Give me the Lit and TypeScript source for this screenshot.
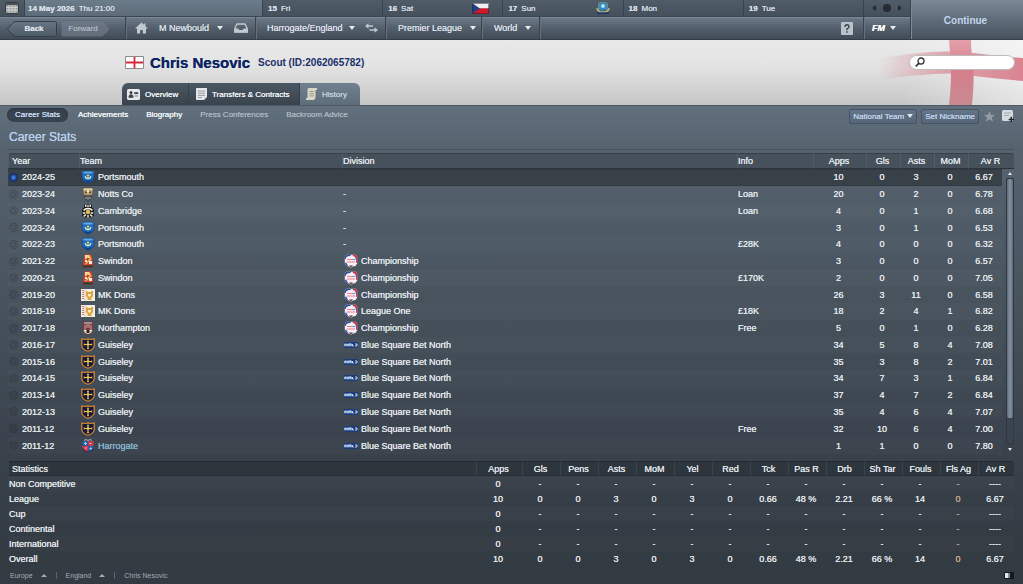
import { LitElement, html, css, svg, nothing, TemplateResult } from "lit";
import { customElement, property, state } from "lit/decorators.js";
import { classMap } from "lit/directives/class-map.js";

type Season = {
  year: string;
  team: string;
  crest: string;
  division?: string;
  logo?: string;
  info?: string;
  stats: [string, string, string, string, string];
};

const season = (
  year: string, team: string, crest: string, division: string, logo: string, info: string, stats: string,
): Season => ({ year, team, crest, division, logo, info, stats: stats.split(" ") as Season["stats"] });

const SEASONS: Season[] = [
  season("2024-25", "Portsmouth", "portsmouth", "", "", "", "10 0 3 0 6.67"),
  season("2023-24", "Notts Co", "notts", "-", "", "Loan", "20 0 2 0 6.78"),
  season("2023-24", "Cambridge", "cambridge", "-", "", "Loan", "4 0 1 0 6.68"),
  season("2023-24", "Portsmouth", "portsmouth", "-", "", "", "3 0 1 0 6.53"),
  season("2022-23", "Portsmouth", "portsmouth", "-", "", "£28K", "4 0 0 0 6.32"),
  season("2021-22", "Swindon", "swindon", "Championship", "league", "", "3 0 0 0 6.57"),
  season("2020-21", "Swindon", "swindon", "Championship", "league", "£170K", "2 0 0 0 7.05"),
  season("2019-20", "MK Dons", "mkdons", "Championship", "league", "", "26 3 11 0 6.58"),
  season("2018-19", "MK Dons", "mkdons", "League One", "league", "£18K", "18 2 4 1 6.82"),
  season("2017-18", "Northampton", "northampton", "Championship", "league", "Free", "5 0 1 0 6.28"),
  season("2016-17", "Guiseley", "guiseley", "Blue Square Bet North", "bluesq", "", "34 5 8 4 7.08"),
  season("2015-16", "Guiseley", "guiseley", "Blue Square Bet North", "bluesq", "", "35 3 8 2 7.01"),
  season("2014-15", "Guiseley", "guiseley", "Blue Square Bet North", "bluesq", "", "34 7 3 1 6.84"),
  season("2013-14", "Guiseley", "guiseley", "Blue Square Bet North", "bluesq", "", "37 4 7 2 6.84"),
  season("2012-13", "Guiseley", "guiseley", "Blue Square Bet North", "bluesq", "", "35 4 6 4 7.07"),
  season("2011-12", "Guiseley", "guiseley", "Blue Square Bet North", "bluesq", "Free", "32 10 6 4 7.00"),
  season("2011-12", "Harrogate", "harrogate", "Blue Square Bet North", "bluesq", "", "1 1 0 0 7.80"),
];

const STAT_COLUMNS = ["Apps", "Gls", "Pens", "Asts", "MoM", "Yel", "Red", "Tck", "Pas R", "Drb", "Sh Tar", "Fouls", "Fls Ag", "Av R"];
const PLAYED = ["10", "0", "0", "3", "0", "3", "0", "0.66", "48 %", "2.21", "66 %", "14", "0", "6.67"];
const UNPLAYED = ["0", ...Array(12).fill("-"), "----"];
const STAT_ROWS: [string, string[]][] = [
  ["Non Competitive", UNPLAYED],
  ["League", PLAYED],
  ["Cup", UNPLAYED],
  ["Continental", UNPLAYED],
  ["International", UNPLAYED],
  ["Overall", PLAYED],
];

const CRESTS: Record<string, TemplateResult> = {
  portsmouth: svg`<path d="M1 1.500Q7 0 13 1.500V7Q12.500 11.500 7 13.500Q1.500 11.500 1 7Z" fill="#1f6cc0" stroke="#12407f" stroke-width=".6"/>
    <path d="M1.300 1.700Q7 .4 12.700 1.700V3.300H1.300Z" fill="#3d86cf"/><path d="M3 2.800h8" stroke="#9cc8e8" stroke-width=".7"/>
    <path d="M4 6a3 3 0 0 0 6 0q-.6 2-3 2t-3-2Z" fill="#e6e7a0" stroke="#d9e6c0" stroke-width=".7"/>
    <circle cx="7" cy="5.600" r="1.200" fill="#ecd65c"/>
    <path d="M2.200 9Q3.500 11.800 7 13Q10.500 11.800 11.800 9Q10 11 7 11Q4 11 2.200 9Z" fill="#12397f"/>`,
  notts: svg`<path d="M2 1h10v5l-1.500 3H3.500L2 6Z" fill="#b09a68" stroke="#4a4234" stroke-width=".6"/><path d="M2.500 1.400h9v1.800h-9Z" fill="#ddd0aa"/>
    <path d="M4 4.500h2v1.500H4zM8 4.500h2v1.500H8z" fill="#4d4538"/><circle cx="7" cy="4.500" r="1.300" fill="#efe9d6"/><path d="M3 8.500h8L10 12l-3 1.800L4 12Z" fill="#2b2d30"/>
    <path d="M5 9.500v2.500M7 9.500v3.500M9 9.500v2.500" stroke="#d8d8d2" stroke-width=".9"/>`,
  cambridge: svg`<path d="M3 .5h8v3l2 2v6l-2 2H3l-2-2v-6l2-2Z" fill="#1d1e1c"/>
    <path d="M4 .7h1.500v2H4zM8.500 .7H10v2H8.500zM6.300 1.200h1.400v2H6.300z" fill="#f4f4ee"/>
    <path d="M2.500 6.300l2.300-1.500h4.400l2.300 1.500M1.800 9h2.400M9.800 9h2.400M2.800 12.500l2-2M11.200 12.500l-2-2" stroke="#f5f4e8" stroke-width="1.500" fill="none"/>
    <circle cx="7" cy="8" r="2.300" fill="#d9bd58"/><path d="M7 11v2.500" stroke="#eee" stroke-width="1.400"/>`,
  swindon: svg`<path d="M3 .5h8v3l1 7.500H2l1-7.500Z" fill="#d0422f"/><path d="M4 1h5L5 5H4z" fill="#f2d7b0"/><path d="M10 3L4 10l1 .5L10.500 5Z" fill="#efc46a"/>
    <path d="M4 6h2v2H4zM8 7h3v3H8z" fill="#f6e9dc"/><circle cx="8" cy="3" r="1.300" fill="#f7d85c"/>
    <path d="M1 10l2 1.500h8L13 10l-1 3.500H2Z" fill="#7c2d1f"/><path d="M3 12.500h8" stroke="#26351f"/>`,
  mkdons: svg`<path d="M0 1h14v12H0Z" fill="#f3efe6"/><path d="M2 2v10" stroke="#b84738" stroke-width="1.400" stroke-dasharray="1 1"/>
    <path d="M4 1v12" stroke="#b6aa96" stroke-width=".5"/><path d="M5 2.500l2 1.500h2.500L12 2.500V8l-2 2.500.8 1.500H6l1-1.500L5 8Z" fill="#e0a536"/>
    <path d="M7 5.500l1.300 1L10 5.500v2L8.400 9 7 7.500Z" fill="#fff6df"/>`,
  northampton: svg`<path d="M1.800 .5h10.400V10q0 2.500-5.200 3.700Q1.800 12.500 1.800 10Z" fill="#7d3643"/><path d="M3 1.200h8v1.500H3z" fill="#b2a9a7"/>
    <path d="M4 4v5M6 3v4M8 3v4M10 4v5" stroke="#d8b7ae" stroke-width=".9"/>
    <path d="M3 9h8v2l-4 2.300L3 11Z" fill="#e7e2d8"/><circle cx="7" cy="10.500" r="1.700" fill="#292024"/><path d="M2.500 9.500l1.500 3M11.500 9.500l-1.500 3" stroke="#578b49"/>`,
  guiseley: svg`<path d="M.8 1L4 1.500 7 .8l3 .7 3.200-.5V8Q12.500 11.500 7 13.300Q1.500 11.500 .8 8Z" fill="#17193a" stroke="#e08b2e" stroke-width="1.200"/>
    <path d="M7 3v8M3 6.500h8" stroke="#efc44c" stroke-width="1.200"/><path d="M6 3.200h2M6 10.700h2M3.300 5.500v2M10.700 5.500v2" stroke="#efc44c" stroke-width=".9"/><circle cx="7" cy="6.500" r="1.300" fill="#efc44c"/>`,
  harrogate: svg`<path d="M1.500 2h11v6.500q-.5 3-5.500 5Q2 11.500 1.500 8.500Z" fill="#2a5ba6"/><path d="M7 2h5.500v5H7zM1.500 7H7v6.500Q2 11.500 1.500 8.500Z" fill="#c93644"/>
    <path d="M3 4.500h3M4.500 3v3M8.500 9.500h2.500M9.700 8.300v2.400" stroke="#a9d5f0" stroke-width=".9"/><path d="M8.500 4.500h2M4 9h2" stroke="#f2d5d0" stroke-width=".9"/>
    <path d="M3 1.500L5 .5 7 1.500 9 .5l2 1" stroke="#ccd0d1" stroke-width=".8" fill="none"/><path d="M1 10q6 6 12 0" stroke="#202d43" fill="none"/>`,
  league: svg`<path d="M2 .8h10L13.200 3V9.500L11.500 12 8.800 12.500 7 13.800 5.200 12.500 2.500 12 .8 9.500V3Z" fill="#f6eff4"/>
    <path d="M.8 5V3L2 .8H7.500L6 2Q2 2.200 1.800 5Z" fill="#2a4fa3"/><path d="M13.200 9V3L12 .8H8.500L9 2Q12.200 2.200 12.200 9Z" fill="#c73452"/>
    <path d="M.8 9l1.700 3 1.700.3L2.200 8.500Z" fill="#2a4fa3"/><path d="M3 5.500h8M3 8h8" stroke="#f1788d" stroke-width="1.200"/>
    <path d="M8 5.500h3" stroke="#5aa5e0" stroke-width="1.200"/><path d="M5 11.500h4L7 13.600Z" fill="#6b2c45"/>`,
  bluesq: svg`<path d="M0 4h14v6H0Z" fill="#1d3b78"/><path d="M0 8.500V5.500h8V8.500Z" fill="#5f86be"/><path d="M1 8V6l1.500 1L4 6v2M5 8V6h2v2M8.500 6v2h1.500M11 6h2v2h-2" stroke="#d4e3f5" stroke-width=".9" fill="none"/>`,
};

const crest = (name: string) => svg`<svg class="crest" viewBox="0 0 14 14" aria-hidden="true">${CRESTS[name]}</svg>`;
const caret = () => html`<span class="caret"></span>`;

const base = css`
  * { box-sizing: border-box; }
  button, input {
    font: inherit; color: inherit; text-shadow: inherit; margin: 0; padding: 0; border: 0; background: none;
  }
  button { cursor: pointer; display: flex; align-items: center; white-space: nowrap; }
  a { color: inherit; text-decoration: none; white-space: nowrap; }
  svg { display: block; flex: none; }
  .caret { width: 0; height: 0; border: 3px solid transparent; border-top: 4px solid #e6ebef; border-bottom: 0; flex: none; }
`;

@customElement("top-bar")
class TopBar extends LitElement {
  static styles = [base, css`
    :host {
      display: grid; grid-template-columns: minmax(0, 1fr) 113px; border-bottom: 1px solid #353e47;
      color: #d9dfe4; font-size: 9px; text-shadow: 0 0 0 currentColor;
    }
    .dates {
      display: grid; grid-template-columns: 24px 238px repeat(5, minmax(0, 1fr)) 47px; height: 17px; font-size: 8px;
      background: linear-gradient(#505d69, #44505b); border-bottom: 1px solid #3b454f;
    }
    .dates > * { display: flex; align-items: center; border-left: 1px solid #38424c; }
    .dates > :first-child { border: 0; justify-content: center; }
    .today { padding-left: 3px; gap: 4px; font-weight: bold; background: linear-gradient(#6c7c8b, #5d6b79); }
    .today span, .day span { font-weight: normal; }
    .day { padding: 0 13px 0 5px; gap: 4px; font-weight: bold; }
    .day svg { margin-left: auto; }
    .pager { justify-content: space-around; padding: 0 3px; }
    .nav { display: flex; height: 22px; background: linear-gradient(#6d7b89, #535f6c 50%, #414b56); box-shadow: inset 0 1px #7b8996; }
    .history { display: flex; gap: 4px; align-items: center; width: 125px; padding: 1px 0 0 7px; font-size: 8px; }
    .arrow { display: grid; place-items: center; }
    .arrow > * { grid-area: 1 / 1; }
    .arrow.back { font-weight: bold; }
    .arrow.back span { padding-left: 4px; }
    .arrow.forward { color: #aab4bd; }
    .arrow.forward span { padding-right: 5px; }
    .seg { display: flex; align-items: center; justify-content: space-between; border-left: 1px solid #39434d; box-shadow: inset 1px 0 #66737f; }
    .seg button { gap: 8px; }
    .club { width: 130px; padding: 0 7px 0 9px; }
    .nation { width: 130px; padding: 0 7px 0 11px; }
    .nation button { gap: 6px; }
    .league { width: 96px; padding: 0 10px 0 12px; }
    .world { width: 58px; padding: 0 10px 0 12px; }
    .rest { flex: 1; padding-right: 10px; justify-content: flex-end; }
    .menu { width: 47px; padding: 0 12px 0 8px; font-weight: bold; font-style: italic; color: #fff; }
    .menu button { gap: 5px; }
    .continue {
      display: flex; justify-content: center; align-items: center; padding: 1px 3px 0 0; font-size: 10px; font-weight: bold; color: #c3d6ec; text-shadow: none;
      background: linear-gradient(#7b8997, #5f6d7a 50%, #46515c); border-left: 1px solid #3a444e; box-shadow: inset 1px 0 #7c8a97;
    }
  `];

  render() {
    const day = (n: string, name: string, icon: unknown = nothing) => html`<div class="day">${n} <span>${name}</span>${icon}</div>`;
    return html`
      <div>
        <div class="dates">
          <div><svg width="14" height="12" viewBox="0 0 14 12"><rect x=".5" y=".5" width="13" height="11" rx="1" fill="#9aa19f" stroke="#353b3f"/><path d="M1 1h12v2H1z" fill="#4a5154"/><path d="M1 5.500h12M1 8h12M4 3v8M7 3v8M10 3v8" stroke="#d8dcd9" stroke-width=".8"/></svg></div>
          <div class="today">14 May 2026 <span>Thu 21:00</span></div>
          ${day("15", "Fri")}
          ${day("16", "Sat", svg`<svg width="17" height="11" viewBox="0 0 17 11"><path d="M0 0h17v5.500H0z" fill="#f0f0f0"/><path d="M0 5.500h17V11H0z" fill="#d2172b"/><path d="M0 0l8 5.500L0 11z" fill="#26407f"/><path d="M.5.5h16v10H.5z" fill="none" stroke="#1c2329" stroke-opacity=".5"/></svg>`)}
          ${day("17", "Sun", svg`<svg width="14" height="14" viewBox="0 0 14 14"><path d="M2 3l2-2h6l2 2v6H2z" fill="#7e8a70"/><circle cx="7" cy="5.500" r="4" fill="#2f86cc"/><circle cx="7" cy="5" r="2" fill="#a8e4fb"/><path d="M1 7q0 4 6 4t6-4" fill="none" stroke="#c5c98d" stroke-width="1.200"/><path d="M1 11.500h12V13H1z" fill="#1f3566"/></svg>`)}
          ${day("18", "Mon")}
          ${day("19", "Tue")}
          <div class="pager">
            <button aria-label="Previous"><svg width="5" height="6"><path d="M5 0v6L1 3z" fill="#23292f"/></svg></button>
            <button aria-label="Today"><svg width="8" height="8"><circle cx="4" cy="4" r="4" fill="#252b30"/></svg></button>
            <button aria-label="Next"><svg width="5" height="6"><path d="M0 0v6l4-3z" fill="#23292f"/></svg></button>
          </div>
        </div>
        <div class="nav">
          <div class="history">
            <button class="arrow back"><svg width="50" height="16" viewBox="0 0 50 16"><defs><linearGradient id="b" x2="0" y2="1"><stop stop-color="#687786"/><stop offset="1" stop-color="#4c5965"/></linearGradient></defs><path d="M9 .5H47.500Q49.500 .5 49.500 2.500V13.500Q49.500 15.500 47.500 15.500H9Q7 15.500 5.500 13.500L1 9Q.3 8 1 7L5.500 2.500Q7 .5 9 .5Z" fill="url(#b)" stroke="#343e48"/></svg><span>Back</span></button>
            <button class="arrow forward"><svg width="49" height="16" viewBox="0 0 49 16"><path d="M2 .5H40Q42 .5 43.500 2.500L48 7Q48.700 8 48 9L43.500 13.500Q42 15.500 40 15.500H2Q.5 15.500.5 13.500V2.500Q.5.5 2 .5Z" fill="#74818d" opacity=".6"/></svg><span>Forward</span></button>
          </div>
          <div class="seg club">
            <button aria-label="Home"><svg width="13" height="12" viewBox="0 0 13 12"><path d="M6.500 .5L0 6.500h2V11.500H5.200V8h2.600v3.500H11V6.500h2L10.500 4.200V1.500H9v1.300Z" fill="#c0c9d0"/></svg></button>
            <button>M Newbould ${caret()}</button>
            <button aria-label="Inbox"><svg width="14" height="10" viewBox="0 0 14 10"><path d="M3 1h8l2.300 4.500V9H.7V5.500Z" fill="none" stroke="#c0c9d0" stroke-width="1.300"/><path d="M.5 5.500h3.800q.5 1.500 1.500 1.500h2.400q1 0 1.500-1.500h3.800V9.500H.5Z" fill="#c0c9d0"/></svg></button>
          </div>
          <div class="seg nation">
            <button>Harrogate/England ${caret()}</button>
            <button aria-label="Switch"><svg width="13" height="10" viewBox="0 0 13 10"><path d="M0 3L3.500 .3V2.300H8V3.700H3.500V5.700ZM13 7L9.500 4.300V6.300H4.500V7.700H9.500V9.700Z" fill="#c0c9d0"/></svg></button>
          </div>
          <div class="seg league"><button>Premier League ${caret()}</button></div>
          <div class="seg world"><button>World ${caret()}</button></div>
          <div class="seg rest"><button aria-label="Help"><svg width="12" height="13" viewBox="0 0 12 13"><rect width="12" height="13" rx="1" fill="#b9c3cb"/><path d="M4 5q0-2.200 2-2.200T8 4.700Q8 6 6 6.800v1.400M6 9.300v1.500" fill="none" stroke="#3b454e" stroke-width="1.400"/></svg></button></div>
          <div class="seg menu"><button>FM ${caret()}</button></div>
        </div>
      </div>
      <button class="continue">Continue</button>
    `;
  }
}

@customElement("person-header")
class PersonHeader extends LitElement {
  static styles = [base, css`
    :host {
      display: block; position: relative; background: linear-gradient(#e9e9e9, #e3e3e3 40%, #c6c6c6);
      border-bottom: 1px solid #4d5965;
    }
    .art { position: absolute; right: 0; top: 0; width: 150px; height: 100%; }
    .title { position: relative; display: flex; align-items: center; height: 43px; padding: 1px 8px 0 125px; color: #1b2f6b; }
    h1 { margin: 0 0 0 6px; font-size: 15px; color: #0b2463; text-shadow: 0 0 0 currentColor; }
    .role { margin-left: 8px; padding-top: 1px; font-size: 10px; font-weight: bold; }
    .search {
      display: flex; align-items: center; margin-left: auto; width: 106px; height: 15px; padding: 0 5px; gap: 3px;
      background: #fff; border: 1px solid #bcbcbc; border-radius: 8px;
    }
    .search input { flex: 1; min-width: 0; color: #222; font-size: 9px; outline: 0; }
    .tabs { position: relative; display: flex; margin-left: 122px; }
    .tab {
      display: flex; align-items: center; gap: 5px; height: 22px; padding-left: 5px; font-size: 8px;
      color: #f1f4f6; background: linear-gradient(#4b5763, #39434d); text-shadow: 0 0 0 currentColor;
      border-right: 1px solid #36404a;
    }
    .overview { width: 67px; border-radius: 6px 0 0 0; }
    .transfers { width: 111px; padding-left: 7px; }
    .active { width: 60px; padding-left: 6px; border: 0; border-radius: 0 6px 0 0; color: #c5d0da; background: linear-gradient(#718191, #5f6d7a); }
  `];

  render() {
    return html`
      <svg class="art" viewBox="0 0 150 65" preserveAspectRatio="xMaxYMid meet" aria-hidden="true">
        <defs>
          <linearGradient id="fade"><stop offset="0" stop-color="#d5717f" stop-opacity="0"/><stop offset=".45" stop-color="#d5717f" stop-opacity=".55"/><stop offset="1" stop-color="#d5717f" stop-opacity=".85"/></linearGradient>
          <linearGradient id="pole" x2="0" y2="1"><stop stop-color="#e3a0aa"/><stop offset=".5" stop-color="#d57f8b"/><stop offset="1" stop-color="#c98a91"/></linearGradient>
          <linearGradient id="white"><stop stop-color="#fff" stop-opacity="0"/><stop offset="1" stop-color="#fff" stop-opacity=".5"/></linearGradient>
        </defs>
        <path d="M30 0H150V65H30Z" fill="url(#white)"/>
        <path d="M5 19Q45 11 78 11.500L101 13Q130 17 150 18V41Q125 39 101 36L77 33.500Q45 34 5 40Z" fill="url(#fade)"/>
        <path d="M76 0H98Q98 10 100.500 30Q101 45 99 65H76Q79 40 77.500 20Z" fill="url(#pole)"/>
      </svg>
      <div class="title">
        <svg width="19" height="13" viewBox="0 0 19 13"><path d="M.5.5h18v12H.5z" fill="#fff" stroke="#8c8c8c"/><path d="M9.500 1v11M1 6.500h17" stroke="#d4283b" stroke-width="1.800"/></svg>
        <h1>Chris Nesovic</h1>
        <span class="role">Scout (ID:2062065782)</span>
        <label class="search">
          <svg width="10" height="10" viewBox="0 0 10 10"><circle cx="6" cy="4" r="3" fill="none" stroke="#333" stroke-width="1.300"/><path d="M4 6.200L.8 9.300" stroke="#333" stroke-width="1.700"/></svg>
          <input type="search" aria-label="Search">
        </label>
      </div>
      <nav class="tabs">
        <a class="tab overview" href="#overview"><svg width="13" height="11" viewBox="0 0 13 11"><rect width="13" height="11" rx="1.500" fill="#e8eaeb"/><circle cx="4" cy="3.500" r="1.500" fill="#39424a"/><path d="M1.800 8.500q0-3 2.200-3t2.200 3ZM7.500 3.500H11v1.300H7.500zM7.500 7H11" fill="#39424a" stroke="#39424a" stroke-width=".6"/></svg>Overview</a>
        <a class="tab transfers" href="#transfers"><svg width="11" height="12" viewBox="0 0 11 12"><path d="M0 0h11v9L8 12H0z" fill="#e4e7e9"/><path d="M2 3h7M2 5.200h7M2 7.400h7M2 9.600h4" stroke="#8c959c" stroke-width=".9"/></svg>Transfers &amp; Contracts</a>
        <a class="tab active" href="#history"><svg width="11" height="12" viewBox="0 0 11 12"><path d="M2 0h9v2H9.500v8L8 12H0v-2h1.500V2Z" fill="#d9d6c7"/><path d="M3.500 3.500h4.300M3.500 5.700h4.300M3.500 7.900h4.300" stroke="#8a8677" stroke-width=".8"/></svg>History</a>
      </nav>
    `;
  }
}

@customElement("sub-nav")
class SubNav extends LitElement {
  static styles = [base, css`
    :host { display: flex; align-items: center; justify-content: space-between; height: 20px; padding: 0 9px 0 7px; font-size: 8px; text-shadow: 0 0 0 currentColor; }
    nav, .tools { display: flex; align-items: center; }
    nav { gap: 2px; padding-bottom: 2px; }
    a { padding: 0 8px; line-height: 14px; color: #f4f6f8; }
    a.muted { color: #a9b5c0; }
    a.active { border-radius: 8px; color: #c9dcf0; background: #384350; box-shadow: inset 0 1px 2px #29323b; }
    .tools { gap: 4px; color: #bfd2e8; }
    .tool { height: 15px; padding: 0 3px; gap: 3px; border: 1px solid #465361; border-radius: 2px; background: linear-gradient(#64758a, #566577); }
    .tool .caret { border-top-color: #dce6f0; }
    .star { margin: 0 3px 0 1px; }
  `];

  render() {
    return html`
      <nav>
        <a class="active" href="#career">Career Stats</a>
        <a href="#achievements">Achievements</a>
        <a href="#biography">Biography</a>
        <a class="muted" href="#press">Press Conferences</a>
        <a class="muted" href="#advice">Backroom Advice</a>
      </nav>
      <div class="tools">
        <button class="tool">National Team ${caret()}</button>
        <button class="tool">Set Nickname</button>
        <button class="star" aria-label="Favourite"><svg width="11" height="11" viewBox="0 0 11 11"><path d="M5.500 0L7 3.800l4 .2-3.100 2.500L9 10.700 5.500 8.300 2 10.700 3.100 6.500 0 4l4-.2Z" fill="#929ba3"/></svg></button>
        <button aria-label="Add note"><svg width="12" height="12" viewBox="0 0 12 12"><path d="M1.500 0h8Q11 0 11 1.500V11H1.500Q0 11 0 9.500v-8Q0 0 1.500 0Z" fill="#d8dcde"/><path d="M2 3h7M2 5.500h5" stroke="#9aa3aa" stroke-width=".9"/><path d="M9.300 6.800v5.200M6.700 9.400H12" stroke="#20262b" stroke-width="1.500"/></svg></button>
      </div>
    `;
  }
}

const tableStyles = css`
  table { width: 100%; border-collapse: separate; border-spacing: 0; table-layout: fixed; }
  th, td { padding: 0 2px 0 0; text-align: center; vertical-align: middle; white-space: nowrap; overflow: hidden; font-weight: normal; }
  thead th { border-left: 1px solid #ffffff12; border-bottom: 1px solid #2d353c; border-top: 1px solid #00000033; }
  thead th:first-child { text-align: left; padding-left: 3px; border-radius: 3px 0 0 0; }
  thead th:last-child { border-radius: 0 3px 0 0; }
`;

@customElement("career-table")
class CareerTable extends LitElement {
  @property({ attribute: false }) seasons: Season[] = [];
  @state() private selected = 0;

  static styles = [base, tableStyles, css`
    :host { display: grid; min-height: 0; }
    table { height: 100%; }
    thead { height: 16px; }
    thead th { height: 16px; background: #46515c; }
    .year { width: 71px; }
    .team { width: 263px; }
    .info { width: 76px; }
    .apps { width: 53px; }
    .num { width: 34px; }
    .bar { width: 12px; }
    .left { text-align: left; }
    tbody td { line-height: 14px; }
    .cell { display: flex; align-items: center; gap: 3px; height: 14px; padding-left: 1px; }
    .crest { width: 14px; height: 14px; margin-left: 1px; }
    tbody tr:nth-child(odd) td { background: #ffffff05; }
    tbody tr.selected td { background: #394148; box-shadow: inset 0 1px #323a41, inset 0 -1px #323a41; }
    tbody td.scroll, tbody tr.selected td.scroll { padding: 0; background: none; box-shadow: none; height: 100%; }
    .link { color: #85b9cf; }
    .pick { appearance: none; width: 9px; height: 9px; border: 1px solid #00000030; border-radius: 50%; margin-right: 1px; background: radial-gradient(#0000 1px, #0003 2px, #0000 3px); }
    .pick:checked { background: radial-gradient(#3d7be0 1px, #1d3c80 3px); }
    .track { display: grid; grid-template-rows: 9px minmax(0, 1fr) 9px; justify-items: center; height: 100%; padding-left: 3px; }
    .track::before, .track::after { content: ""; align-self: center; border: 2px solid transparent; border-bottom: 3px solid #e3e8ec; border-top: 0; }
    .track::after { transform: rotate(180deg); }
    .rail { width: 8px; border: 1px solid #2f3840; border-radius: 2px; background: #3a444e; }
    .thumb { height: 90%; border-radius: 2px; background: linear-gradient(90deg, #5c6a78, #8593a3 50%, #5c6a78); }
  `];

  render() {
    return html`
      <table>
        <colgroup>
          <col class="year"><col class="team"><col><col class="info"><col class="apps">
          <col class="num"><col class="num"><col class="num"><col class="num"><col class="bar">
        </colgroup>
        <thead>
          <tr>
            <th>Year</th><th class="left">Team</th><th class="left">Division</th><th class="left">Info</th>
            <th>Apps</th><th>Gls</th><th>Asts</th><th>MoM</th><th colspan="2">Av R</th>
          </tr>
        </thead>
        <tbody>${this.seasons.map((s, i) => this.row(s, i))}</tbody>
      </table>
    `;
  }

  private row(s: Season, i: number) {
    return html`
      <tr class=${classMap({ selected: i === this.selected })}>
        <td><div class="cell"><input class="pick" type="radio" name="season" aria-label=${`${s.year} ${s.team}`}
          .checked=${i === this.selected} @change=${() => (this.selected = i)}>${s.year}</div></td>
        <td><div class="cell">${crest(s.crest)}<span class=${classMap({ link: s.team === "Harrogate" })}>${s.team}</span></div></td>
        <td><div class="cell">${s.logo ? crest(s.logo) : nothing}<span>${s.division}</span></div></td>
        <td><div class="cell">${s.info}</div></td>
        ${s.stats.map((v) => html`<td>${v}</td>`)}
        ${i === 0 ? html`<td class="scroll" rowspan=${this.seasons.length} aria-hidden="true"><div class="track"><div class="rail"><div class="thumb"></div></div></div></td>` : nothing}
      </tr>
    `;
  }
}

@customElement("stats-table")
class StatsTable extends LitElement {
  static styles = [base, tableStyles, css`
    :host { display: block; }
    thead th { height: 15px; background: #2d353d; border-bottom-color: #262d33; }
    tbody th, tbody td { height: 15px; }
    tbody th { text-align: left; padding-left: 1px; }
    tbody tr:nth-child(odd) > * { background: #ffffff05; }
    .apps { width: 46px; }
    .num { width: 38px; }
    .last { width: 36px; }
    .amber { color: #c9ab8a; }
  `];

  render() {
    return html`
      <table>
        <colgroup>
          <col>
          ${STAT_COLUMNS.map((_, i) => html`<col class=${i === 0 ? "apps" : i === 13 ? "last" : "num"}>`)}
        </colgroup>
        <thead><tr><th>Statistics</th>${STAT_COLUMNS.map((c) => html`<th scope="col">${c}</th>`)}</tr></thead>
        <tbody>
          ${STAT_ROWS.map(([name, values]) => html`
            <tr><th scope="row">${name}</th>${values.map((v, i) => html`<td class=${i === 12 ? "amber" : ""}>${v}</td>`)}</tr>`)}
        </tbody>
      </table>
    `;
  }
}

@customElement("app-root")
class AppRoot extends LitElement {
  static styles = [base, css`
    :host {
      display: flex; flex-direction: column; height: 100vh; min-height: 560px; overflow: hidden;
      font-family: "Liberation Sans", Arial, sans-serif; font-size: 8px; color: #e2e7eb;
      background: linear-gradient(#62707d 105px, #56636f 150px, #4d5964 240px, #3b444e 430px, #333b43 540px, #323a42);
    }
    main { flex: 1; display: flex; flex-direction: column; min-height: 0; padding: 0 9px 0 8px; font-size: 9px; text-shadow: 0 0 0 currentColor; }
    h2 { margin: 0; padding: 3px 1px 0; height: 24px; line-height: 16px; font-size: 12px; font-weight: normal; color: #b9d0ec; border-bottom: 1px solid #47535e; }
    career-table { flex: 1; margin: 3px 0 7px; }
    footer { display: flex; align-items: center; height: 18px; padding: 0 9px 0 10px; font-size: 7px; color: #a3adb6; }
    footer a { display: flex; align-items: center; gap: 8px; padding-right: 9px; margin-right: 9px; border-right: 1px solid #59636c; }
    footer a:last-of-type { border: 0; }
    .up { width: 0; height: 0; border: 3px solid transparent; border-bottom-color: #a3adb6; border-top: 0; }
    footer svg { margin-left: auto; }
  `];

  render() {
    return html`
      <top-bar></top-bar>
      <person-header></person-header>
      <sub-nav></sub-nav>
      <main>
        <h2>Career Stats</h2>
        <career-table .seasons=${SEASONS}></career-table>
        <stats-table></stats-table>
      </main>
      <footer>
        <a href="#europe">Europe <span class="up"></span></a>
        <a href="#england">England <span class="up"></span></a>
        <a href="#person">Chris Nesovic</a>
        <svg width="10" height="7" viewBox="0 0 10 7"><rect width="10" height="7" rx="1" fill="#15191c"/><path d="M1 1h3v5H1z" fill="#e4e6e7"/><path d="M4 1h2v5H4z" fill="#868c91"/></svg>
      </footer>
    `;
  }
}
